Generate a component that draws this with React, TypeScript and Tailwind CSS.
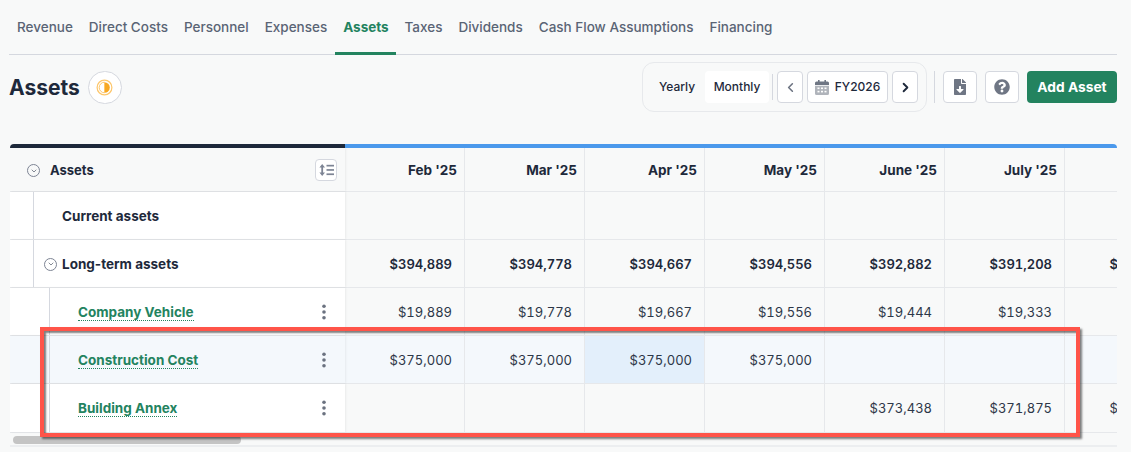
import { ChevronLeft, ChevronRight, ChevronDown } from "lucide-react";
import { FaFileDownload, FaQuestionCircle } from "react-icons/fa";

const tabs = ["Revenue", "Direct Costs", "Personnel", "Expenses", "Assets", "Taxes", "Dividends", "Cash Flow Assumptions", "Financing"];
const months = ["Feb '25", "Mar '25", "Apr '25", "May '25", "June '25", "July '25", "Aug '25"];

const rows = [
  { label: "Current assets", kind: "section", values: ["", "", "", "", "", "", ""] },
  { label: "Long-term assets", kind: "group", values: ["$394,889", "$394,778", "$394,667", "$394,556", "$392,882", "$391,208", "$389,534"] },
  { label: "Company Vehicle", kind: "item", values: ["$19,889", "$19,778", "$19,667", "$19,556", "$19,444", "$19,333", "$19,222"] },
  { label: "Construction Cost", kind: "item", highlight: true, values: ["$375,000", "$375,000", "$375,000", "$375,000", "", "", ""] },
  { label: "Building Annex", kind: "item", last: true, values: ["", "", "", "", "$373,438", "$371,875", "$370,313"] },
];

function CircleToggle() {
  return (
    <span className="flex h-[13px] w-[13px] shrink-0 items-center justify-center rounded-full border border-[#7d8494]">
      <ChevronDown size={8} strokeWidth={2.5} className="text-[#6b7280]" />
    </span>
  );
}

function Dots() {
  return (
    <svg width="6" height="16" viewBox="0 0 6 16" className="-mt-[2px] fill-[#6b7280]">
      <circle cx="3" cy="2.2" r="1.8" />
      <circle cx="3" cy="8" r="1.8" />
      <circle cx="3" cy="13.8" r="1.8" />
    </svg>
  );
}

function CalendarIcon() {
  return (
    <svg width="14" height="15" viewBox="0 0 14 15" className="fill-[#6f7684]">
      <rect x="3" y="0" width="1.6" height="3" />
      <rect x="9.4" y="0" width="1.6" height="3" />
      <path d="M1.5 1.6h11A1.5 1.5 0 0 1 14 3.1V5H0V3.1a1.5 1.5 0 0 1 1.5-1.5z" />
      <path d="M0 5.8h14v7.7a1.5 1.5 0 0 1-1.5 1.5h-11A1.5 1.5 0 0 1 0 13.5z" opacity="0.55" />
      <g fill="#fff">
        <rect x="2.5" y="7.5" width="2" height="1.6" />
        <rect x="6" y="7.5" width="2" height="1.6" />
        <rect x="9.5" y="7.5" width="2" height="1.6" />
        <rect x="2.5" y="10.8" width="2" height="1.6" />
        <rect x="6" y="10.8" width="2" height="1.6" />
        <rect x="9.5" y="10.8" width="2" height="1.6" />
      </g>
    </svg>
  );
}

export default function App() {
  return (
    <div className="relative h-[452px] w-[1131px] overflow-hidden bg-[#f8f9f9] pl-[9px] pr-[14px] font-['Inter',sans-serif] text-[#1e293b]">
      <div className="flex h-[55px] items-start border-b border-[#d5d8df]">
        {tabs.map((tab) => (
          <div
            key={tab}
            className={
              tab === "Assets"
                ? "flex h-[55px] items-center border-b-[3px] border-[#23835f] px-2 pt-[3px] text-[13.5px] font-bold tracking-[-0.04px] text-[#23835f]"
                : "flex h-[55px] items-center border-b-[3px] border-transparent px-2 pt-[3px] text-[13.5px] font-medium text-[#5a6475]"
            }
          >
            {tab}
          </div>
        ))}
      </div>

      <div className="flex h-[89px] items-start justify-between">
        <div className="mt-[16px] flex h-[33px] items-center gap-2">
          <h1 className="text-[21px] font-bold leading-none text-[#1e293b]">Assets</h1>
          <span className="flex h-[33px] w-[34px] items-center justify-center rounded-full border border-[#d5d8df] bg-white">
            <svg width="17" height="17" viewBox="0 0 17 17">
              <circle cx="8.5" cy="8.5" r="7.4" fill="none" stroke="#fdc66a" strokeWidth="1.2" />
              <path d="M8.5 3.2a5.3 5.3 0 0 1 0 10.6z" fill="#f7a823" />
              <path d="M8.5 3.2a5.3 5.3 0 0 0 0 10.6z" fill="#fff" stroke="#fdc66a" strokeWidth="1" />
            </svg>
          </span>
        </div>

        <div className="mt-[7px] flex items-start">
          <div className="flex h-[50px] w-[285px] items-center rounded-xl border border-[#e7e9ec] pl-[6px]">
            <span className="flex h-8 w-[56px] items-center justify-center text-[12px] font-medium text-[#1e293b]">Yearly</span>
            <span className="flex h-8 w-[64px] items-center justify-center rounded bg-white text-[12px] font-medium text-[#1e293b]">Monthly</span>
            <span className="ml-[3px] h-[26px] w-px bg-[#d5d8df]" />
            <button className="ml-1 flex h-8 w-[26px] items-center justify-center rounded-sm border border-[#d5d8df] bg-white">
              <ChevronLeft size={15} strokeWidth={2.5} className="text-[#6b7280]" />
            </button>
            <button className="ml-1 flex h-8 w-[81px] items-center justify-center gap-[6px] rounded-sm border border-[#d5d8df] bg-white text-[12px] font-medium">
              <CalendarIcon />
              FY2026
            </button>
            <button className="ml-1 flex h-8 w-[26px] items-center justify-center rounded-sm border border-[#d5d8df] bg-white">
              <ChevronRight size={15} strokeWidth={3} className="text-[#1e293b]" />
            </button>
          </div>
          <span className="ml-[7px] mt-[9px] h-8 w-px bg-[#d5d8df]" />
          <button className="ml-2 mt-[9px] flex h-8 w-[34px] items-center justify-center rounded-sm border border-[#d5d8df] bg-white">
            <FaFileDownload size={16} className="text-[#6f7684]" />
          </button>
          <button className="ml-2 mt-[9px] flex h-8 w-[34px] items-center justify-center rounded-sm border border-[#d5d8df] bg-white">
            <FaQuestionCircle size={16} className="text-[#6f7684]" />
          </button>
          <button className="ml-2 mt-[9px] flex h-8 w-[90px] items-center justify-center rounded bg-[#23835f] text-[13.75px] font-bold text-white">
            Add Asset
          </button>
        </div>
      </div>

      <div className="ml-px h-[303px] overflow-hidden rounded-t border-b-2 border-[#eceef0]">
        <div className="flex h-1">
          <div className="w-[335px] bg-[#1e293b]" />
          <div className="flex-1 bg-[#4b99ec]" />
        </div>

        <div className="flex h-[44px] border-b border-[#e6e8eb]">
          <div className="flex w-[335px] shrink-0 items-center justify-between pl-[17px] pr-[8px] text-[13px] font-bold shadow-[1px_0_2px_rgba(0,0,0,0.06)]">
            <span className="flex items-center gap-[10px] pt-[2px]">
              <CircleToggle />
              Assets
            </span>
            <span className="flex h-[22px] w-[22px] items-center justify-center rounded-sm border border-[#d5d8df] bg-white">
              <svg width="15" height="12" viewBox="0 0 15 12" className="fill-[#7d8494]">
                <path d="M3.2 0 6 3.4H4.1v5.2H6L3.2 12 .4 8.6h1.9V3.4H.4z" />
                <rect x="7.5" y="0.8" width="7.5" height="1.7" />
                <rect x="7.5" y="5.1" width="7.5" height="1.7" />
                <rect x="7.5" y="9.4" width="7.5" height="1.7" />
              </svg>
            </span>
          </div>
          {months.map((month) => (
            <div key={month} className="flex w-[120px] shrink-0 items-center justify-end border-r border-[#e6e8eb] pr-[7px] pt-px text-[13.5px] font-bold">
              {month}
            </div>
          ))}
        </div>

        {rows.map((row) => (
          <div key={row.label} className={`flex border-b border-[#e6e8eb] ${row.last ? "h-[49px]" : "h-[48px]"} ${row.highlight ? "bg-[#f4f8fc]" : ""}`}>
            <div className={`relative z-10 flex w-[335px] shrink-0 shadow-[1px_0_2px_rgba(0,0,0,0.06)] ${row.highlight ? "bg-[#f4f8fc]" : "bg-white"}`}>
              <div className={row.kind === "item" ? `ml-[39px] flex flex-1 items-center justify-between border-l border-[#d5d8df] pl-[28px] pr-[18px] ${row.last ? "pt-px" : "pt-[2px]"}` : "ml-[23px] flex flex-1 items-center gap-[5px] border-l border-[#d5d8df] pl-[10px] pt-px"}>
                {row.kind === "group" && <CircleToggle />}
                {row.kind === "item" ? (
                  <>
                    <span className="border-b border-dotted border-[#23835f] text-[13.5px] font-bold leading-[15px] text-[#23835f]">{row.label}</span>
                    <Dots />
                  </>
                ) : (
                  <span className={`text-[13.5px] font-bold ${row.kind === "section" ? "ml-[18px]" : ""}`}>{row.label}</span>
                )}
              </div>
            </div>
            {row.values.map((value, i) => (
              <div
                key={i}
                className={`flex w-[120px] shrink-0 items-center justify-end border-r border-[#e6e8eb] pr-3 text-[13px] tabular-nums ${row.last ? "pt-px" : "pt-[2px]"} ${row.kind === "group" ? "font-semibold" : "font-normal text-[#2d3748]"} ${row.highlight && i === 2 ? "bg-[#e3effb]" : ""}`}
              >
                {value}
              </div>
            ))}
          </div>
        ))}

        <div className="px-[3px] pt-[3px]">
          <div className="h-[8px] w-[228px] rounded-full bg-[#c4c4c4]" />
        </div>
      </div>

      <div className="pointer-events-none absolute left-[40px] top-[327px] z-20 h-[110px] w-[1040px] border-4 border-[#ff5449] shadow-[2px_2px_2px_rgba(0,0,0,0.5),inset_2px_2px_2px_rgba(0,0,0,0.5)]" />
    </div>
  );
}
